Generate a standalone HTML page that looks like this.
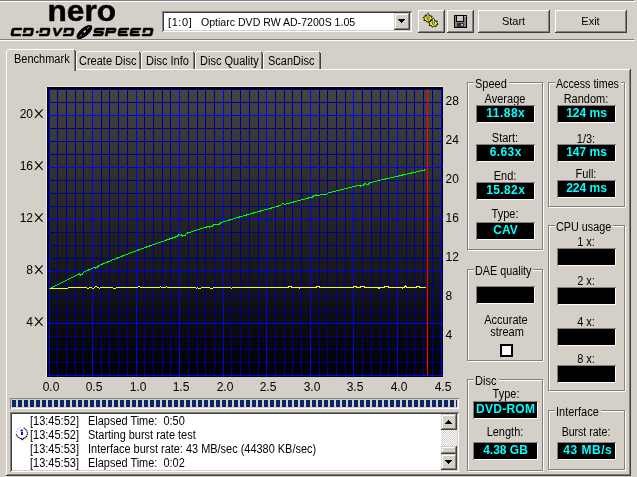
<!DOCTYPE html>
<html><head><meta charset="utf-8"><style>
html,body{margin:0;padding:0;background:#d4d0c8}
body{will-change:transform;width:637px;height:477px;background:#d4d0c8;position:relative;overflow:hidden;font-family:"Liberation Sans",sans-serif;font-size:11px;color:#000}
body div, body svg{position:absolute}
body div div{position:absolute}
.t{font-size:12px;line-height:13px;white-space:nowrap;transform:scaleX(0.917);transform-origin:0 0}
.b{line-height:13px;white-space:nowrap}
.lcd{font-weight:bold;font-size:12px;line-height:16px;color:#0ff;text-align:center;white-space:nowrap}
.cl{font-size:12px;line-height:14px;white-space:nowrap}
.x{display:inline-block;margin-left:2px}
</style></head><body>
<div style="left:0px;top:0px;width:634px;height:1px;background:#808080;"></div>
<div style="left:0px;top:1px;width:635px;height:1px;background:#fff;"></div>
<div style="left:0px;top:39px;width:634px;height:1px;background:#808080;"></div>
<div style="left:0px;top:40px;width:635px;height:1px;background:#fff;"></div>
<svg style="left:0;top:0" width="160" height="39" viewBox="0 0 160 39">
<text x="47.5" y="20.7" font-family="Liberation Sans" font-weight="bold" font-size="30" fill="#000" stroke="#000" stroke-width="0.5" textLength="68.5" lengthAdjust="spacingAndGlyphs">nero</text>
<path transform="matrix(1 0 -0.19 1 6.84 0)" fill="#000" stroke="#000" stroke-width="0.45" d="M20.5,28H12.3Q10.5,28 10.5,29.8V34.2Q10.5,36 12.3,36H20.5V34H12.9V30H20.5ZM22.5,28H30.7Q32.5,28 32.5,29.8V34.2Q32.5,36 30.7,36H22.5V34H30.1V30H22.5ZM22.5,29.5h2.4v3h-2.4ZM35.5,31h2v2h-2ZM39,28H47.2Q49,28 49,29.8V34.2Q49,36 47.2,36H39V34H46.6V30H39ZM39,29.5h2.4v3h-2.4ZM51.5,28H54.0L56.4,33.8L58.8,28H61.3L57.5,36H55.3ZM63,28H71.2Q73,28 73,29.8V34.2Q73,36 71.2,36H63V34H70.6V30H63ZM63,29.5h2.4v3h-2.4ZM103,28H94.8Q93,28 93,29.8V31.2Q93,33 94.8,33H100.6V34H93V36H101.2Q103,36 103,34.2V32.8Q103,31 101.2,31H95.4V30H103ZM105,36V28H113.2Q115,28 115,29.8V31.2Q115,33 113.2,33H107.4V36Z M107.4,30V31H112.6V30ZM127.5,28H119.3Q117.5,28 117.5,29.8V34.2Q117.5,36 119.3,36H127.5V34H119.9V33H126.0V31H119.9V30H127.5ZM139.5,28H131.3Q129.5,28 129.5,29.8V34.2Q129.5,36 131.3,36H139.5V34H131.9V33H138.0V31H131.9V30H139.5ZM142,28H150.2Q152,28 152,29.8V34.2Q152,36 150.2,36H142V34H149.6V30H142ZM142,29.5h2.4v3h-2.4Z"/>
<g transform="rotate(-40 84.4 32)"><ellipse cx="84.4" cy="32" rx="9.6" ry="4.3" fill="#000"/>
<ellipse cx="85" cy="31.8" rx="1.4" ry="0.9" fill="#e8e8e8"/>
<path d="M77.5,32.5 L81,32.2 M88.5,31.3 L91.5,31.2" stroke="#bbb" stroke-width="0.8"/></g>
</svg>
<div style="left:162px;top:11px;width:250px;height:21px;background:#fff;box-shadow:inset 1px 1px #808080,inset -1px -1px #fff,inset 2px 2px #404040,inset -2px -2px #d4d0c8"></div>
<div class="b" style="left:168px;top:16px;letter-spacing:0.6px">[1:0]</div>
<div class="b" style="left:200.5px;top:16px;transform:scaleX(0.96);transform-origin:0 0">Optiarc DVD RW AD-7200S 1.05</div>
<div style="left:394px;top:13px;width:16px;height:17px;background:#d4d0c8;box-shadow:inset -1px -1px #404040,inset 1px 1px #d4d0c8,inset -2px -2px #808080,inset 2px 2px #fff"></div>
<div style="left:398px;top:19px;width:7px;height:1px;background:#000"></div>
<div style="left:399px;top:20px;width:5px;height:1px;background:#000"></div>
<div style="left:400px;top:21px;width:3px;height:1px;background:#000"></div>
<div style="left:401px;top:22px;width:1px;height:1px;background:#000"></div>
<div style="left:418px;top:10px;width:27px;height:23px;background:#d4d0c8;box-shadow:inset -1px -1px #404040,inset 1px 1px #fff,inset -2px -2px #808080"></div>
<div style="left:447px;top:10px;width:27px;height:23px;background:#d4d0c8;box-shadow:inset -1px -1px #404040,inset 1px 1px #fff,inset -2px -2px #808080"></div>
<svg style="left:418px;top:10px" width="27" height="23" viewBox="0 0 27 23">
<polygon points="14.90,9.09 12.82,9.82 12.76,11.63 10.65,10.97 9.01,12.22 8.10,10.56 5.83,10.51 6.66,8.82 5.10,7.51 7.18,6.78 7.24,4.97 9.35,5.63 10.99,4.38 11.90,6.04 14.17,6.09 13.34,7.78" fill="#ffff00" stroke="#000" stroke-width="0.9" stroke-linejoin="round"/>
<path d="M9,9.2V4.4L10,2.8L11,4.4V9.2Z" fill="#e4e4f4" stroke="#222" stroke-width="0.7"/>
<polygon points="20.20,14.09 18.12,14.82 18.06,16.63 15.95,15.97 14.31,17.22 13.40,15.56 11.13,15.51 11.96,13.82 10.40,12.51 12.48,11.78 12.54,9.97 14.65,10.63 16.29,9.38 17.20,11.04 19.47,11.09 18.64,12.78" fill="#ffff00" stroke="#000" stroke-width="0.9" stroke-linejoin="round"/>
<path d="M14.3,14.2V9.4L15.3,7.8L16.3,9.4V14.2Z" fill="#e4e4f4" stroke="#222" stroke-width="0.7"/>
</svg>
<svg style="left:0;top:0" width="480" height="40" shape-rendering="crispEdges">
<rect x="454" y="15" width="13" height="13" fill="#000"/>
<rect x="455" y="16" width="11" height="11" fill="#808080"/>
<rect x="456" y="15" width="8" height="7" fill="#000"/>
<rect x="457" y="16" width="6" height="5" fill="#c8c8c8"/>
<rect x="465" y="16" width="1" height="1" fill="#fff"/>
<rect x="457" y="23" width="7" height="4" fill="#303030"/>
<rect x="461" y="24" width="2" height="2" fill="#b0b0b0"/>
</svg>
<div style="left:478px;top:10px;width:72px;height:23px;background:#d4d0c8;box-shadow:inset -1px -1px #404040,inset 1px 1px #fff,inset -2px -2px #808080"></div>
<div class="b" style="left:453.5px;top:15px;width:120px;text-align:center;transform-origin:50% 0;">Start</div>
<div style="left:555px;top:10px;width:72px;height:23px;background:#d4d0c8;box-shadow:inset -1px -1px #404040,inset 1px 1px #fff,inset -2px -2px #808080"></div>
<div class="b" style="left:530.5px;top:15px;width:120px;text-align:center;transform-origin:50% 0;">Exit</div>
<div style="left:6px;top:69px;width:625px;height:407px;background:#d4d0c8;box-shadow:inset -1px -1px #404040,inset 1px 1px #fff,inset -2px -2px #808080"></div>
<div style="left:76px;top:51px;width:65px;height:18px;background:#d4d0c8;"></div>
<div style="left:76px;top:53px;width:1px;height:16px;background:#fff;"></div>
<div style="left:77px;top:52px;width:1px;height:1px;background:#fff;"></div>
<div style="left:78px;top:51px;width:61px;height:1px;background:#fff;"></div>
<div style="left:139px;top:52px;width:1px;height:1px;background:#404040;"></div>
<div style="left:139px;top:53px;width:1px;height:16px;background:#808080;"></div>
<div style="left:140px;top:53px;width:1px;height:16px;background:#404040;"></div>
<div style="left:141px;top:51px;width:54px;height:18px;background:#d4d0c8;"></div>
<div style="left:141px;top:53px;width:1px;height:16px;background:#fff;"></div>
<div style="left:142px;top:52px;width:1px;height:1px;background:#fff;"></div>
<div style="left:143px;top:51px;width:50px;height:1px;background:#fff;"></div>
<div style="left:193px;top:52px;width:1px;height:1px;background:#404040;"></div>
<div style="left:193px;top:53px;width:1px;height:16px;background:#808080;"></div>
<div style="left:194px;top:53px;width:1px;height:16px;background:#404040;"></div>
<div style="left:195px;top:51px;width:68px;height:18px;background:#d4d0c8;"></div>
<div style="left:195px;top:53px;width:1px;height:16px;background:#fff;"></div>
<div style="left:196px;top:52px;width:1px;height:1px;background:#fff;"></div>
<div style="left:197px;top:51px;width:64px;height:1px;background:#fff;"></div>
<div style="left:261px;top:52px;width:1px;height:1px;background:#404040;"></div>
<div style="left:261px;top:53px;width:1px;height:16px;background:#808080;"></div>
<div style="left:262px;top:53px;width:1px;height:16px;background:#404040;"></div>
<div style="left:263px;top:51px;width:58px;height:18px;background:#d4d0c8;"></div>
<div style="left:263px;top:53px;width:1px;height:16px;background:#fff;"></div>
<div style="left:264px;top:52px;width:1px;height:1px;background:#fff;"></div>
<div style="left:265px;top:51px;width:54px;height:1px;background:#fff;"></div>
<div style="left:319px;top:52px;width:1px;height:1px;background:#404040;"></div>
<div style="left:319px;top:53px;width:1px;height:16px;background:#808080;"></div>
<div style="left:320px;top:53px;width:1px;height:16px;background:#404040;"></div>
<div style="left:6px;top:49px;width:70px;height:22px;background:#d4d0c8;"></div>
<div style="left:6px;top:51px;width:1px;height:20px;background:#fff;"></div>
<div style="left:7px;top:50px;width:1px;height:1px;background:#fff;"></div>
<div style="left:8px;top:49px;width:66px;height:1px;background:#fff;"></div>
<div style="left:74px;top:50px;width:1px;height:1px;background:#404040;"></div>
<div style="left:74px;top:51px;width:1px;height:20px;background:#808080;"></div>
<div style="left:75px;top:51px;width:1px;height:20px;background:#404040;"></div>
<div class="t" style="left:14px;top:53px;">Benchmark</div>
<div class="t" style="left:79px;top:55px;">Create Disc</div>
<div class="t" style="left:146px;top:55px;">Disc Info</div>
<div class="t" style="left:200px;top:55px;">Disc Quality</div>
<div class="t" style="left:268px;top:55px;">ScanDisc</div>
<svg style="left:0;top:0" width="460" height="400" viewBox="0 0 460 400" shape-rendering="crispEdges">
<defs><linearGradient id="g" x1="0" y1="0" x2="0" y2="1"><stop offset="0" stop-color="#444"/><stop offset="1" stop-color="#000"/></linearGradient></defs>
<rect x="46" y="88" width="1" height="289" fill="#ebebe6"/><rect x="48" y="86" width="395" height="1" fill="#ebebe6"/><rect x="47" y="87" width="1" height="1" fill="#f4f4f0"/>
<rect x="47" y="87" width="396" height="290" fill="#000"/>
<rect x="49" y="89" width="392" height="286" fill="url(#g)"/>
<g fill="#000090"><rect x="47" y="362" width="396" height="1"/><rect x="47" y="349" width="396" height="1"/><rect x="47" y="336" width="396" height="1"/><rect x="47" y="310" width="396" height="1"/><rect x="47" y="297" width="396" height="1"/><rect x="47" y="284" width="396" height="1"/><rect x="47" y="258" width="396" height="1"/><rect x="47" y="245" width="396" height="1"/><rect x="47" y="232" width="396" height="1"/><rect x="47" y="206" width="396" height="1"/><rect x="47" y="193" width="396" height="1"/><rect x="47" y="180" width="396" height="1"/><rect x="47" y="154" width="396" height="1"/><rect x="47" y="141" width="396" height="1"/><rect x="47" y="128" width="396" height="1"/><rect x="47" y="102" width="396" height="1"/><rect x="47" y="89" width="396" height="1"/><rect x="57" y="89" width="1" height="288"/><rect x="66" y="89" width="1" height="288"/><rect x="75" y="89" width="1" height="288"/><rect x="83" y="89" width="1" height="288"/><rect x="101" y="89" width="1" height="288"/><rect x="109" y="89" width="1" height="288"/><rect x="118" y="89" width="1" height="288"/><rect x="127" y="89" width="1" height="288"/><rect x="144" y="89" width="1" height="288"/><rect x="153" y="89" width="1" height="288"/><rect x="162" y="89" width="1" height="288"/><rect x="170" y="89" width="1" height="288"/><rect x="188" y="89" width="1" height="288"/><rect x="197" y="89" width="1" height="288"/><rect x="205" y="89" width="1" height="288"/><rect x="214" y="89" width="1" height="288"/><rect x="231" y="89" width="1" height="288"/><rect x="240" y="89" width="1" height="288"/><rect x="249" y="89" width="1" height="288"/><rect x="258" y="89" width="1" height="288"/><rect x="275" y="89" width="1" height="288"/><rect x="284" y="89" width="1" height="288"/><rect x="292" y="89" width="1" height="288"/><rect x="301" y="89" width="1" height="288"/><rect x="319" y="89" width="1" height="288"/><rect x="327" y="89" width="1" height="288"/><rect x="336" y="89" width="1" height="288"/><rect x="345" y="89" width="1" height="288"/><rect x="362" y="89" width="1" height="288"/><rect x="371" y="89" width="1" height="288"/><rect x="380" y="89" width="1" height="288"/><rect x="388" y="89" width="1" height="288"/><rect x="406" y="89" width="1" height="288"/><rect x="414" y="89" width="1" height="288"/><rect x="423" y="89" width="1" height="288"/><rect x="432" y="89" width="1" height="288"/></g><g fill="#0000ff"><rect x="47" y="375" width="396" height="1"/><rect x="47" y="323" width="396" height="1"/><rect x="47" y="271" width="396" height="1"/><rect x="47" y="219" width="396" height="1"/><rect x="47" y="167" width="396" height="1"/><rect x="47" y="115" width="396" height="1"/><rect x="49" y="89" width="1" height="288"/><rect x="92" y="89" width="1" height="288"/><rect x="136" y="89" width="1" height="288"/><rect x="179" y="89" width="1" height="288"/><rect x="223" y="89" width="1" height="288"/><rect x="266" y="89" width="1" height="288"/><rect x="310" y="89" width="1" height="288"/><rect x="353" y="89" width="1" height="288"/><rect x="397" y="89" width="1" height="288"/><rect x="441" y="89" width="1" height="288"/></g><rect x="47" y="89" width="396" height="1" fill="#000090"/>
<polyline fill="none" stroke="#00ff00" stroke-width="1" points="49.5,288.8 50.5,288.3 51.5,287.7 52.5,287.2 53.5,286.7 54.5,286.2 55.5,285.7 56.5,285.1 57.5,284.6 58.5,284.1 59.5,283.6 60.5,283.1 61.5,282.6 62.5,282.1 63.5,281.6 64.5,281.1 65.5,280.6 66.5,280.1 67.5,279.7 68.5,279.2 69.5,278.7 70.5,278.2 71.5,277.7 72.5,277.3 73.5,276.8 74.5,276.3 75.5,275.9 76.5,275.4 77.5,274.9 78.5,274.5 79.5,274.0 80.5,275.1 81.5,274.6 82.5,274.2 83.5,272.2 84.5,271.8 85.5,271.3 86.5,270.9 87.5,270.4 88.5,270.0 89.5,269.6 90.5,269.1 91.5,268.7 92.5,268.3 93.5,267.8 94.5,267.4 95.5,268.0 96.5,267.5 97.5,267.1 98.5,265.7 99.5,265.3 100.5,264.9 101.5,264.4 102.5,264.0 103.5,263.6 104.5,263.2 105.5,262.8 106.5,262.4 107.5,262.0 108.5,261.6 109.5,261.1 110.5,260.7 111.5,260.3 112.5,259.9 113.5,259.5 114.5,259.1 115.5,258.7 116.5,258.3 117.5,258.0 118.5,257.6 119.5,257.2 120.5,256.8 121.5,256.4 122.5,256.0 123.5,255.6 124.5,255.2 125.5,254.8 126.5,254.5 127.5,254.1 128.5,253.7 129.5,253.3 130.5,252.9 131.5,252.6 132.5,252.2 133.5,251.8 134.5,251.4 135.5,251.1 136.5,250.7 137.5,250.3 138.5,250.0 139.5,249.6 140.5,249.2 141.5,248.9 142.5,248.5 143.5,248.1 144.5,247.8 145.5,247.4 146.5,247.0 147.5,246.7 148.5,246.3 149.5,246.0 150.5,245.6 151.5,245.2 152.5,244.9 153.5,244.5 154.5,244.2 155.5,243.8 156.5,243.5 157.5,243.1 158.5,242.8 159.5,242.4 160.5,242.1 161.5,241.7 162.5,241.4 163.5,241.1 164.5,240.7 165.5,240.4 166.5,240.0 167.5,239.7 168.5,239.3 169.5,239.0 170.5,238.7 171.5,238.3 172.5,238.0 173.5,237.7 174.5,237.3 175.5,237.0 176.5,236.6 177.5,236.3 178.5,235.0 179.5,234.7 180.5,235.3 181.5,235.0 182.5,236.2 183.5,235.8 184.5,235.5 185.5,235.2 186.5,233.4 187.5,233.0 188.5,232.7 189.5,232.4 190.5,232.1 191.5,231.7 192.5,231.4 193.5,231.1 194.5,230.8 195.5,230.5 196.5,230.1 197.5,229.8 198.5,229.5 199.5,229.2 200.5,228.9 201.5,228.6 202.5,228.2 203.5,227.9 204.5,227.6 205.5,227.3 206.5,227.0 207.5,226.7 208.5,226.4 209.5,227.1 210.5,226.7 211.5,226.4 212.5,226.1 213.5,224.8 214.5,224.5 215.5,224.2 216.5,224.9 217.5,224.6 218.5,224.3 219.5,224.0 220.5,222.7 221.5,222.4 222.5,222.1 223.5,221.8 224.5,221.5 225.5,221.2 226.5,220.9 227.5,220.6 228.5,220.3 229.5,220.0 230.5,219.7 231.5,219.4 232.5,219.1 233.5,218.8 234.5,218.5 235.5,218.2 236.5,217.9 237.5,217.6 238.5,217.3 239.5,217.0 240.5,216.7 241.5,216.5 242.5,216.2 243.5,215.9 244.5,215.6 245.5,215.3 246.5,215.0 247.5,214.7 248.5,214.4 249.5,214.1 250.5,213.9 251.5,213.6 252.5,213.3 253.5,213.0 254.5,212.7 255.5,212.4 256.5,212.2 257.5,211.9 258.5,211.6 259.5,211.3 260.5,211.0 261.5,210.7 262.5,210.5 263.5,210.2 264.5,209.9 265.5,209.6 266.5,209.3 267.5,209.1 268.5,208.8 269.5,208.5 270.5,208.2 271.5,208.0 272.5,207.7 273.5,207.4 274.5,207.1 275.5,206.9 276.5,206.6 277.5,206.3 278.5,206.0 279.5,205.8 280.5,205.5 281.5,204.2 282.5,203.9 283.5,203.7 284.5,204.4 285.5,204.1 286.5,203.9 287.5,203.6 288.5,203.3 289.5,203.1 290.5,202.8 291.5,202.5 292.5,202.3 293.5,202.0 294.5,201.7 295.5,201.5 296.5,201.2 297.5,200.9 298.5,200.7 299.5,200.4 300.5,200.1 301.5,199.9 302.5,199.6 303.5,199.3 304.5,199.1 305.5,198.8 306.5,198.6 307.5,198.3 308.5,198.0 309.5,197.8 310.5,197.5 311.5,197.3 312.5,197.0 313.5,195.7 314.5,195.5 315.5,195.2 316.5,195.0 317.5,195.7 318.5,195.5 319.5,195.2 320.5,194.9 321.5,194.7 322.5,194.4 323.5,194.2 324.5,194.9 325.5,194.7 326.5,194.4 327.5,193.2 328.5,192.9 329.5,192.6 330.5,192.4 331.5,192.1 332.5,191.9 333.5,191.6 334.5,191.4 335.5,191.1 336.5,190.9 337.5,190.6 338.5,190.4 339.5,190.1 340.5,189.9 341.5,189.6 342.5,189.4 343.5,189.1 344.5,188.9 345.5,188.6 346.5,188.4 347.5,188.2 348.5,187.9 349.5,187.7 350.5,187.4 351.5,187.2 352.5,186.9 353.5,186.7 354.5,186.4 355.5,186.2 356.5,185.9 357.5,185.7 358.5,185.5 359.5,185.2 360.5,186.0 361.5,185.7 362.5,185.5 363.5,185.2 364.5,184.0 365.5,183.8 366.5,184.5 367.5,184.3 368.5,184.0 369.5,182.8 370.5,182.6 371.5,182.3 372.5,182.1 373.5,181.8 374.5,181.6 375.5,181.4 376.5,181.1 377.5,180.9 378.5,180.7 379.5,180.4 380.5,180.2 381.5,179.9 382.5,179.7 383.5,179.5 384.5,179.2 385.5,179.0 386.5,178.8 387.5,178.5 388.5,178.3 389.5,178.1 390.5,177.8 391.5,177.6 392.5,177.4 393.5,177.1 394.5,176.9 395.5,176.7 396.5,176.4 397.5,176.2 398.5,176.0 399.5,175.7 400.5,175.5 401.5,175.3 402.5,175.0 403.5,174.8 404.5,174.6 405.5,174.3 406.5,174.1 407.5,173.9 408.5,173.7 409.5,173.4 410.5,173.2 411.5,173.0 412.5,172.7 413.5,172.5 414.5,172.3 415.5,172.1 416.5,171.8 417.5,171.6 418.5,171.4 419.5,171.2 420.5,170.9 421.5,170.7 422.5,170.5 423.5,170.3 424.5,170.0 425.5,169.8"/>
<polyline fill="none" stroke="#ffff00" stroke-width="1" points="49.5,288.5 50.5,288.5 51.5,288.5 52.5,288.5 53.5,288.5 54.5,288.5 55.5,288.5 56.5,288.5 57.5,288.5 58.5,288.5 59.5,288.5 60.5,288.5 61.5,288.5 62.5,288.5 63.5,288.5 64.5,288.5 65.5,288.5 66.5,288.5 67.5,288.5 68.5,287.5 69.5,287.5 70.5,287.5 71.5,287.5 72.5,287.5 73.5,287.5 74.5,287.5 75.5,287.5 76.5,287.5 77.5,287.5 78.5,287.5 79.5,287.5 80.5,287.5 81.5,287.5 82.5,287.5 83.5,287.5 84.5,287.5 85.5,287.5 86.5,287.5 87.5,288.5 88.5,288.5 89.5,287.5 90.5,287.5 91.5,287.5 92.5,288.5 93.5,288.5 94.5,287.5 95.5,286.5 96.5,286.5 97.5,287.5 98.5,287.5 99.5,288.5 100.5,287.5 101.5,287.5 102.5,287.5 103.5,287.5 104.5,287.5 105.5,287.5 106.5,287.5 107.5,287.5 108.5,287.5 109.5,287.5 110.5,287.5 111.5,287.5 112.5,287.5 113.5,288.5 114.5,288.5 115.5,288.5 116.5,287.5 117.5,287.5 118.5,287.5 119.5,287.5 120.5,287.5 121.5,287.5 122.5,287.5 123.5,287.5 124.5,287.5 125.5,287.5 126.5,287.5 127.5,287.5 128.5,287.5 129.5,287.5 130.5,287.5 131.5,287.5 132.5,287.5 133.5,287.5 134.5,287.5 135.5,287.5 136.5,287.5 137.5,287.5 138.5,286.5 139.5,286.5 140.5,287.5 141.5,287.5 142.5,287.5 143.5,287.5 144.5,287.5 145.5,287.5 146.5,287.5 147.5,287.5 148.5,287.5 149.5,287.5 150.5,287.5 151.5,287.5 152.5,287.5 153.5,287.5 154.5,287.5 155.5,287.5 156.5,287.5 157.5,287.5 158.5,287.5 159.5,287.5 160.5,286.5 161.5,287.5 162.5,287.5 163.5,287.5 164.5,287.5 165.5,287.5 166.5,286.5 167.5,287.5 168.5,287.5 169.5,287.5 170.5,287.5 171.5,287.5 172.5,287.5 173.5,287.5 174.5,287.5 175.5,287.5 176.5,287.5 177.5,287.5 178.5,287.5 179.5,287.5 180.5,287.5 181.5,287.5 182.5,287.5 183.5,287.5 184.5,287.5 185.5,287.5 186.5,287.5 187.5,287.5 188.5,287.5 189.5,287.5 190.5,287.5 191.5,287.5 192.5,287.5 193.5,287.5 194.5,287.5 195.5,287.5 196.5,288.5 197.5,287.5 198.5,288.5 199.5,288.5 200.5,288.5 201.5,287.5 202.5,287.5 203.5,287.5 204.5,287.5 205.5,287.5 206.5,287.5 207.5,287.5 208.5,287.5 209.5,287.5 210.5,288.5 211.5,288.5 212.5,288.5 213.5,287.5 214.5,287.5 215.5,287.5 216.5,287.5 217.5,287.5 218.5,287.5 219.5,287.5 220.5,287.5 221.5,287.5 222.5,287.5 223.5,287.5 224.5,287.5 225.5,287.5 226.5,287.5 227.5,287.5 228.5,287.5 229.5,287.5 230.5,287.5 231.5,288.5 232.5,287.5 233.5,287.5 234.5,287.5 235.5,287.5 236.5,287.5 237.5,287.5 238.5,287.5 239.5,287.5 240.5,287.1 241.5,287.1 242.5,287.1 243.5,287.1 244.5,287.1 245.5,287.1 246.5,287.1 247.5,287.1 248.5,287.1 249.5,287.1 250.5,287.1 251.5,287.1 252.5,287.1 253.5,287.1 254.5,287.1 255.5,287.1 256.5,287.1 257.5,287.1 258.5,287.1 259.5,287.1 260.5,287.1 261.5,287.1 262.5,287.1 263.5,287.1 264.5,287.1 265.5,287.1 266.5,287.1 267.5,287.1 268.5,287.1 269.5,287.1 270.5,287.1 271.5,287.1 272.5,287.1 273.5,287.1 274.5,287.1 275.5,287.1 276.5,287.1 277.5,287.1 278.5,287.1 279.5,287.1 280.5,287.1 281.5,287.1 282.5,287.1 283.5,287.1 284.5,287.1 285.5,287.1 286.5,287.1 287.5,287.1 288.5,287.1 289.5,286.1 290.5,286.1 291.5,287.1 292.5,287.1 293.5,287.1 294.5,287.1 295.5,287.1 296.5,287.1 297.5,287.1 298.5,287.1 299.5,288.1 300.5,287.1 301.5,287.1 302.5,287.1 303.5,287.1 304.5,287.1 305.5,287.1 306.5,287.1 307.5,287.1 308.5,287.1 309.5,287.1 310.5,287.1 311.5,287.1 312.5,287.1 313.5,287.1 314.5,287.1 315.5,287.1 316.5,287.1 317.5,286.1 318.5,286.1 319.5,287.1 320.5,287.1 321.5,287.1 322.5,287.1 323.5,287.1 324.5,287.1 325.5,287.1 326.5,287.1 327.5,287.1 328.5,287.1 329.5,287.1 330.5,287.1 331.5,287.1 332.5,287.1 333.5,287.1 334.5,287.1 335.5,287.1 336.5,287.1 337.5,287.1 338.5,287.1 339.5,287.1 340.5,287.1 341.5,287.1 342.5,287.1 343.5,287.1 344.5,287.1 345.5,287.1 346.5,287.1 347.5,287.1 348.5,287.1 349.5,287.1 350.5,287.1 351.5,287.1 352.5,287.1 353.5,287.1 354.5,286.1 355.5,286.1 356.5,287.1 357.5,287.1 358.5,287.1 359.5,287.1 360.5,287.1 361.5,286.1 362.5,286.1 363.5,286.1 364.5,287.1 365.5,287.1 366.5,287.1 367.5,287.1 368.5,287.1 369.5,287.1 370.5,287.1 371.5,287.1 372.5,287.1 373.5,287.1 374.5,287.1 375.5,287.1 376.5,287.1 377.5,287.1 378.5,288.1 379.5,288.1 380.5,287.1 381.5,287.1 382.5,287.1 383.5,287.1 384.5,287.1 385.5,286.1 386.5,286.1 387.5,286.1 388.5,287.1 389.5,287.1 390.5,287.1 391.5,287.1 392.5,287.1 393.5,287.1 394.5,287.1 395.5,287.1 396.5,287.1 397.5,287.1 398.5,287.1 399.5,287.1 400.5,287.1 401.5,287.1 402.5,288.1 403.5,287.1 404.5,287.1 405.5,286.1 406.5,287.1 407.5,287.1 408.5,287.1 409.5,287.1 410.5,287.1 411.5,287.1 412.5,287.1 413.5,287.1 414.5,287.1 415.5,287.1 416.5,287.1 417.5,286.1 418.5,286.1 419.5,287.1 420.5,287.1 421.5,287.1 422.5,287.1 423.5,287.1 424.5,287.1 425.5,287.1"/>
<rect x="427" y="89" width="1" height="286" fill="#ff0000"/>
</svg>
<div class="cl" style="left:0px;top:315px;width:33px;text-align:right">4</div>
<svg style="left:34px;top:317px" width="10" height="10"><path d="M1,0.3 L8.6,8.9 M8.6,0.3 L1,8.9" stroke="#000" stroke-width="1.05" fill="none"/></svg>
<div class="cl" style="left:0px;top:263px;width:33px;text-align:right">8</div>
<svg style="left:34px;top:265px" width="10" height="10"><path d="M1,0.3 L8.6,8.9 M8.6,0.3 L1,8.9" stroke="#000" stroke-width="1.05" fill="none"/></svg>
<div class="cl" style="left:0px;top:211px;width:33px;text-align:right">12</div>
<svg style="left:34px;top:213px" width="10" height="10"><path d="M1,0.3 L8.6,8.9 M8.6,0.3 L1,8.9" stroke="#000" stroke-width="1.05" fill="none"/></svg>
<div class="cl" style="left:0px;top:159px;width:33px;text-align:right">16</div>
<svg style="left:34px;top:161px" width="10" height="10"><path d="M1,0.3 L8.6,8.9 M8.6,0.3 L1,8.9" stroke="#000" stroke-width="1.05" fill="none"/></svg>
<div class="cl" style="left:0px;top:107px;width:33px;text-align:right">20</div>
<svg style="left:34px;top:109px" width="10" height="10"><path d="M1,0.3 L8.6,8.9 M8.6,0.3 L1,8.9" stroke="#000" stroke-width="1.05" fill="none"/></svg>
<div class="cl" style="left:445.5px;top:328px">4</div>
<div class="cl" style="left:445.5px;top:289px">8</div>
<div class="cl" style="left:445.5px;top:250px">12</div>
<div class="cl" style="left:445.5px;top:211px">16</div>
<div class="cl" style="left:445.5px;top:172px">20</div>
<div class="cl" style="left:445.5px;top:133px">24</div>
<div class="cl" style="left:445.5px;top:94px">28</div>
<div class="cl" style="left:31px;top:380px;width:40px;text-align:center">0.0</div>
<div class="cl" style="left:74px;top:380px;width:40px;text-align:center">0.5</div>
<div class="cl" style="left:118px;top:380px;width:40px;text-align:center">1.0</div>
<div class="cl" style="left:161px;top:380px;width:40px;text-align:center">1.5</div>
<div class="cl" style="left:205px;top:380px;width:40px;text-align:center">2.0</div>
<div class="cl" style="left:248px;top:380px;width:40px;text-align:center">2.5</div>
<div class="cl" style="left:292px;top:380px;width:40px;text-align:center">3.0</div>
<div class="cl" style="left:335px;top:380px;width:40px;text-align:center">3.5</div>
<div class="cl" style="left:379px;top:380px;width:40px;text-align:center">4.0</div>
<div class="cl" style="left:423px;top:380px;width:40px;text-align:center">4.5</div>
<div style="left:10px;top:398px;width:449px;height:11px;box-shadow:inset 1px 1px #808080,inset -1px -1px #fff"></div>
<svg style="left:0;top:0" width="460" height="410" shape-rendering="crispEdges"><clipPath id="pc"><rect x="11" y="399" width="446" height="9"/></clipPath><g fill="#0a246a" clip-path="url(#pc)"><rect x="12" y="400" width="4" height="7"/><rect x="18" y="400" width="4" height="7"/><rect x="24" y="400" width="4" height="7"/><rect x="30" y="400" width="4" height="7"/><rect x="36" y="400" width="4" height="7"/><rect x="42" y="400" width="4" height="7"/><rect x="48" y="400" width="4" height="7"/><rect x="54" y="400" width="4" height="7"/><rect x="60" y="400" width="4" height="7"/><rect x="66" y="400" width="4" height="7"/><rect x="72" y="400" width="4" height="7"/><rect x="78" y="400" width="4" height="7"/><rect x="84" y="400" width="4" height="7"/><rect x="90" y="400" width="4" height="7"/><rect x="96" y="400" width="4" height="7"/><rect x="102" y="400" width="4" height="7"/><rect x="108" y="400" width="4" height="7"/><rect x="114" y="400" width="4" height="7"/><rect x="120" y="400" width="4" height="7"/><rect x="126" y="400" width="4" height="7"/><rect x="132" y="400" width="4" height="7"/><rect x="138" y="400" width="4" height="7"/><rect x="144" y="400" width="4" height="7"/><rect x="150" y="400" width="4" height="7"/><rect x="156" y="400" width="4" height="7"/><rect x="162" y="400" width="4" height="7"/><rect x="168" y="400" width="4" height="7"/><rect x="174" y="400" width="4" height="7"/><rect x="180" y="400" width="4" height="7"/><rect x="186" y="400" width="4" height="7"/><rect x="192" y="400" width="4" height="7"/><rect x="198" y="400" width="4" height="7"/><rect x="204" y="400" width="4" height="7"/><rect x="210" y="400" width="4" height="7"/><rect x="216" y="400" width="4" height="7"/><rect x="222" y="400" width="4" height="7"/><rect x="228" y="400" width="4" height="7"/><rect x="234" y="400" width="4" height="7"/><rect x="240" y="400" width="4" height="7"/><rect x="246" y="400" width="4" height="7"/><rect x="252" y="400" width="4" height="7"/><rect x="258" y="400" width="4" height="7"/><rect x="264" y="400" width="4" height="7"/><rect x="270" y="400" width="4" height="7"/><rect x="276" y="400" width="4" height="7"/><rect x="282" y="400" width="4" height="7"/><rect x="288" y="400" width="4" height="7"/><rect x="294" y="400" width="4" height="7"/><rect x="300" y="400" width="4" height="7"/><rect x="306" y="400" width="4" height="7"/><rect x="312" y="400" width="4" height="7"/><rect x="318" y="400" width="4" height="7"/><rect x="324" y="400" width="4" height="7"/><rect x="330" y="400" width="4" height="7"/><rect x="336" y="400" width="4" height="7"/><rect x="342" y="400" width="4" height="7"/><rect x="348" y="400" width="4" height="7"/><rect x="354" y="400" width="4" height="7"/><rect x="360" y="400" width="4" height="7"/><rect x="366" y="400" width="4" height="7"/><rect x="372" y="400" width="4" height="7"/><rect x="378" y="400" width="4" height="7"/><rect x="384" y="400" width="4" height="7"/><rect x="390" y="400" width="4" height="7"/><rect x="396" y="400" width="4" height="7"/><rect x="402" y="400" width="4" height="7"/><rect x="408" y="400" width="4" height="7"/><rect x="414" y="400" width="4" height="7"/><rect x="420" y="400" width="4" height="7"/><rect x="426" y="400" width="4" height="7"/><rect x="432" y="400" width="4" height="7"/><rect x="438" y="400" width="4" height="7"/><rect x="444" y="400" width="4" height="7"/><rect x="450" y="400" width="4" height="7"/><rect x="456" y="400" width="4" height="7"/></g></svg>
<div style="left:10px;top:412px;width:449px;height:60px;background:#fff;box-shadow:inset 1px 1px #808080,inset -1px -1px #fff,inset 2px 2px #404040,inset -2px -2px #d4d0c8"></div>
<div style="left:12px;top:414px;width:429px;height:56px;overflow:hidden">
<div class="t" style="left:18px;top:1px">[13:45:52]</div><div class="t" style="left:76px;top:1px;transform:scaleX(0.912)">Elapsed Time:&nbsp; 0:50</div>
<div class="t" style="left:18px;top:15px">[13:45:52]</div><div class="t" style="left:76px;top:15px;transform:scaleX(0.912)">Starting burst rate test</div>
<div class="t" style="left:18px;top:29px">[13:45:53]</div><div class="t" style="left:76px;top:29px;transform:scaleX(0.912)">Interface burst rate: 43 MB/sec (44380 KB/sec)</div>
<div class="t" style="left:18px;top:43px">[13:45:53]</div><div class="t" style="left:76px;top:43px;transform:scaleX(0.912)">Elapsed Time:&nbsp; 0:02</div>
</div>
<svg style="left:12px;top:424px" width="20" height="20" viewBox="0 0 20 20" shape-rendering="geometricPrecision">
<circle cx="9.8" cy="9.2" r="5.6" fill="#fff"/>
<path d="M11.6,4 A5.6,5.6 0 0 1 12.5,14.2 M8.6,14.5 A5.6,5.6 0 0 1 4.3,10" fill="none" stroke="#000" stroke-width="1.1" stroke-dasharray="1.3 0.6"/>
<path d="M4.4,8 A5.6,5.6 0 0 1 8.5,3.8" fill="none" stroke="#888" stroke-width="1" stroke-dasharray="1 1.4"/>
<path d="M8.6,14 L10.4,15.8 L12.2,13.6" fill="none" stroke="#000" stroke-width="1.1"/>
<path d="M8,6.9 L9.6,5 L11.2,6.9Z" fill="#0000ff"/><rect x="9" y="7.6" width="2" height="3.4" fill="#0000ff"/>
</svg>
<div style="left:441px;top:430px;width:16px;height:24px;background-image:repeating-conic-gradient(#fff 0 25%,#d4d0c8 0 50%);background-size:2px 2px"></div>
<div style="left:441px;top:414px;width:16px;height:16px;background:#d4d0c8;box-shadow:inset -1px -1px #404040,inset 1px 1px #d4d0c8,inset -2px -2px #808080,inset 2px 2px #fff"></div>
<div style="left:445px;top:423px;width:7px;height:1px;background:#000"></div>
<div style="left:446px;top:422px;width:5px;height:1px;background:#000"></div>
<div style="left:447px;top:421px;width:3px;height:1px;background:#000"></div>
<div style="left:448px;top:420px;width:1px;height:1px;background:#000"></div>
<div style="left:441px;top:446px;width:16px;height:8px;background:#d4d0c8;box-shadow:inset -1px -1px #404040,inset 1px 1px #d4d0c8,inset -2px -2px #808080,inset 2px 2px #fff"></div>
<div style="left:441px;top:454px;width:16px;height:16px;background:#d4d0c8;box-shadow:inset -1px -1px #404040,inset 1px 1px #d4d0c8,inset -2px -2px #808080,inset 2px 2px #fff"></div>
<div style="left:445px;top:460px;width:7px;height:1px;background:#000"></div>
<div style="left:446px;top:461px;width:5px;height:1px;background:#000"></div>
<div style="left:447px;top:462px;width:3px;height:1px;background:#000"></div>
<div style="left:448px;top:463px;width:1px;height:1px;background:#000"></div>
<div style="left:468px;top:83px;width:74px;height:166px;border:1px solid #fff"></div>
<div style="left:467px;top:82px;width:74px;height:166px;border:1px solid #808080"></div>
<div style="left:474px;top:79px;width:35px;height:6px;background:#d4d0c8;"></div>
<div class="t" style="left:475px;top:78px;transform:scaleX(0.917)">Speed</div>
<div class="t" style="left:445.0px;top:93px;width:120px;text-align:center;transform-origin:50% 0;">Average</div>
<div style="left:476px;top:105px;width:59px;height:18px;background:#000;box-shadow:inset 1px 1px #808080,inset -1px -1px #fff"></div>
<div class="lcd" style="left:476.25px;top:105px;width:59px;letter-spacing:0.5px">11.88x</div>
<div class="t" style="left:445.0px;top:132px;width:120px;text-align:center;transform-origin:50% 0;">Start:</div>
<div style="left:476px;top:144px;width:59px;height:18px;background:#000;box-shadow:inset 1px 1px #808080,inset -1px -1px #fff"></div>
<div class="lcd" style="left:476.2px;top:144px;width:59px;letter-spacing:0.4px">6.63x</div>
<div class="t" style="left:445.0px;top:170px;width:120px;text-align:center;transform-origin:50% 0;">End:</div>
<div style="left:476px;top:182px;width:59px;height:18px;background:#000;box-shadow:inset 1px 1px #808080,inset -1px -1px #fff"></div>
<div class="lcd" style="left:476.2px;top:182px;width:59px;letter-spacing:0.4px">15.82x</div>
<div class="t" style="left:445.0px;top:208px;width:120px;text-align:center;transform-origin:50% 0;">Type:</div>
<div style="left:476px;top:222px;width:59px;height:18px;background:#000;box-shadow:inset 1px 1px #808080,inset -1px -1px #fff"></div>
<div class="lcd" style="left:476.0px;top:222px;width:59px;letter-spacing:0px">CAV</div>
<div style="left:549px;top:83px;width:75px;height:123px;border:1px solid #fff"></div>
<div style="left:548px;top:82px;width:75px;height:123px;border:1px solid #808080"></div>
<div style="left:555px;top:79px;width:66px;height:6px;background:#d4d0c8;"></div>
<div class="t" style="left:556px;top:78px;transform:scaleX(0.89)">Access times</div>
<div class="t" style="left:526.0px;top:93px;width:120px;text-align:center;transform-origin:50% 0;">Random:</div>
<div style="left:557px;top:105px;width:59px;height:18px;background:#000;box-shadow:inset 1px 1px #808080,inset -1px -1px #fff"></div>
<div class="lcd" style="left:557.0px;top:105px;width:59px;letter-spacing:0px">124 ms</div>
<div class="t" style="left:526.0px;top:133px;width:120px;text-align:center;transform-origin:50% 0;">1/3:</div>
<div style="left:557px;top:144px;width:59px;height:18px;background:#000;box-shadow:inset 1px 1px #808080,inset -1px -1px #fff"></div>
<div class="lcd" style="left:557.0px;top:144px;width:59px;letter-spacing:0px">147 ms</div>
<div class="t" style="left:526.0px;top:168px;width:120px;text-align:center;transform-origin:50% 0;">Full:</div>
<div style="left:557px;top:180px;width:59px;height:18px;background:#000;box-shadow:inset 1px 1px #808080,inset -1px -1px #fff"></div>
<div class="lcd" style="left:557.0px;top:180px;width:59px;letter-spacing:0px">224 ms</div>
<div style="left:549px;top:226px;width:75px;height:164px;border:1px solid #fff"></div>
<div style="left:548px;top:225px;width:75px;height:164px;border:1px solid #808080"></div>
<div style="left:555px;top:222px;width:58px;height:6px;background:#d4d0c8;"></div>
<div class="t" style="left:556px;top:221px;transform:scaleX(0.9)">CPU usage</div>
<div class="t" style="left:526.0px;top:236px;width:120px;text-align:center;transform-origin:50% 0;">1 x:</div>
<div style="left:557px;top:248px;width:59px;height:18px;background:#000;box-shadow:inset 1px 1px #808080,inset -1px -1px #fff"></div>
<div class="t" style="left:526.0px;top:275px;width:120px;text-align:center;transform-origin:50% 0;">2 x:</div>
<div style="left:557px;top:287px;width:59px;height:18px;background:#000;box-shadow:inset 1px 1px #808080,inset -1px -1px #fff"></div>
<div class="t" style="left:526.0px;top:316px;width:120px;text-align:center;transform-origin:50% 0;">4 x:</div>
<div style="left:557px;top:328px;width:59px;height:18px;background:#000;box-shadow:inset 1px 1px #808080,inset -1px -1px #fff"></div>
<div class="t" style="left:526.0px;top:353px;width:120px;text-align:center;transform-origin:50% 0;">8 x:</div>
<div style="left:557px;top:365px;width:59px;height:18px;background:#000;box-shadow:inset 1px 1px #808080,inset -1px -1px #fff"></div>
<div style="left:468px;top:270px;width:74px;height:90px;border:1px solid #fff"></div>
<div style="left:467px;top:269px;width:74px;height:90px;border:1px solid #808080"></div>
<div style="left:474px;top:266px;width:59px;height:6px;background:#d4d0c8;"></div>
<div class="t" style="left:475px;top:265px;transform:scaleX(0.9)">DAE quality</div>
<div style="left:476px;top:286px;width:59px;height:18px;background:#000;box-shadow:inset 1px 1px #808080,inset -1px -1px #fff"></div>
<div class="t" style="left:446.0px;top:314px;width:120px;text-align:center;transform-origin:50% 0;">Accurate</div>
<div class="t" style="left:447.0px;top:326px;width:120px;text-align:center;transform-origin:50% 0;">stream</div>
<div style="left:500px;top:344px;width:9px;height:9px;border:2px solid #000;background:#fff"></div>
<div style="left:468px;top:380px;width:74px;height:90px;border:1px solid #fff"></div>
<div style="left:467px;top:379px;width:74px;height:90px;border:1px solid #808080"></div>
<div style="left:474px;top:376px;width:25px;height:6px;background:#d4d0c8;"></div>
<div class="t" style="left:475px;top:375px;transform:scaleX(0.917)">Disc</div>
<div class="t" style="left:446.0px;top:388px;width:120px;text-align:center;transform-origin:50% 0;">Type:</div>
<div style="left:473px;top:401px;width:65px;height:18px;background:#000;box-shadow:inset 1px 1px #808080,inset -1px -1px #fff"></div>
<div class="lcd" style="left:473.125px;top:401px;width:65px;letter-spacing:0.25px">DVD-ROM</div>
<div class="t" style="left:445.0px;top:426px;width:120px;text-align:center;transform-origin:50% 0;">Length:</div>
<div style="left:473px;top:442px;width:65px;height:18px;background:#000;box-shadow:inset 1px 1px #808080,inset -1px -1px #fff"></div>
<div class="lcd" style="left:473.0px;top:442px;width:65px;letter-spacing:0px">4.38 GB</div>
<div style="left:549px;top:411px;width:75px;height:58px;border:1px solid #fff"></div>
<div style="left:548px;top:410px;width:75px;height:58px;border:1px solid #808080"></div>
<div style="left:555px;top:407px;width:46px;height:6px;background:#d4d0c8;"></div>
<div class="t" style="left:556px;top:406px;transform:scaleX(0.917)">Interface</div>
<div class="t" style="left:526.0px;top:426px;width:120px;text-align:center;transform-origin:50% 0;transform:scaleX(0.88)">Burst rate:</div>
<div style="left:557px;top:442px;width:59px;height:18px;background:#000;box-shadow:inset 1px 1px #808080,inset -1px -1px #fff"></div>
<div class="lcd" style="left:558.25px;top:442px;width:59px;letter-spacing:0.5px">43 MB/s</div>
</body></html>
